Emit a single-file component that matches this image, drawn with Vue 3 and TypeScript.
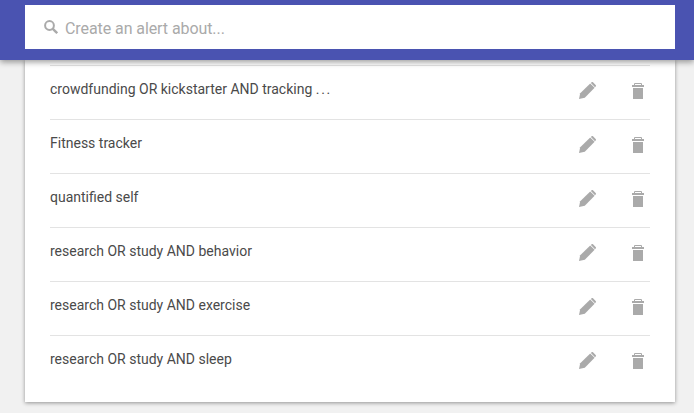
<template>
  <div class="page">
    <header class="topbar">
      <label class="search">
        <svg class="search__icon" viewBox="0 0 14 14" width="14" height="14">
          <circle cx="5.5" cy="5.5" r="4.4" fill="none" stroke="#aaa" stroke-width="2" />
          <path d="M8.6 8.6 13.2 13.2" stroke="#aaa" stroke-width="2.4" />
        </svg>
        <input class="search__input" type="text" placeholder="Create an alert about..." />
      </label>
    </header>
    <main class="card">
      <div v-for="alert in alerts" :key="alert.name" class="row">
        <span class="row__name">{{ alert.name }} <span v-if="alert.cut" class="row__cut">...</span></span>
        <svg class="row__edit" viewBox="0 0 17 17" width="17" height="17">
          <path d="M0 17 1.2 11.2 11.2 1.4 15.6 5.8 5.8 15.8Z" fill="#aaa" />
          <path d="M11.9 1 12.6.3c.4-.4 1-.4 1.4 0l2.7 2.7c.4.4.4 1 0 1.4l-.7.8Z" fill="#aaa" />
        </svg>
        <svg class="row__delete" viewBox="0 0 12 16" width="12" height="16">
          <path d="M2.5 2V.5h7V2" fill="none" stroke="#aaa" stroke-width="1" />
          <path d="M0 2h12v2H0ZM1 5h10v11H1Z" fill="#aaa" />
        </svg>
      </div>
    </main>
  </div>
</template>

<script setup lang="ts">
const alerts: { name: string; cut?: boolean }[] = [
  { name: 'crowdfunding OR kickstarter AND tracking', cut: true },
  { name: 'Fitness tracker' },
  { name: 'quantified self' },
  { name: 'research OR study AND behavior' },
  { name: 'research OR study AND exercise' },
  { name: 'research OR study AND sleep' },
]
</script>

<style>
html,
body {
  margin: 0;
  background: #f1f1f1;
}
</style>

<style scoped>
.page {
  height: 413px;
  overflow: hidden;
  font-family: Roboto, "Liberation Sans", sans-serif;
}

.topbar {
  position: relative;
  z-index: 1;
  height: 60px;
  box-sizing: border-box;
  padding: 5px 19px 0 25px;
  background: #4a53b1;
  box-shadow: 0 2px 6px rgba(0, 0, 0, 0.4);
}

.search {
  display: flex;
  align-items: center;
  height: 44px;
  padding-left: 19px;
  background: #fff;
}

.search__icon {
  flex: none;
  margin-right: 7px;
}

.search__input {
  flex: 1;
  border: 0;
  outline: none;
  padding: 2px 0 0;
  font: 16px Roboto, "Liberation Sans", sans-serif;
  letter-spacing: -0.08px;
  background: transparent;
}

.search__input::placeholder {
  color: #aaa;
  opacity: 1;
}

.card {
  width: 650px;
  height: 342px;
  box-sizing: border-box;
  margin-left: 25px;
  padding: 5px 25px 0;
  background: #fff;
  box-shadow: 0 1px 4px rgba(0, 0, 0, 0.4);
}

.row {
  display: flex;
  align-items: center;
  height: 54px;
  box-sizing: border-box;
  padding-bottom: 4px;
  border-top: 1px solid #e3e3e3;
  color: #4a4a4a;
}

.row__name {
  flex: 1;
  padding-bottom: 4px;
  font-size: 14px;
}

.row__cut {
  letter-spacing: 1.7px;
}

.row__edit {
  flex: none;
  margin-right: 36px;
}

.row__delete {
  flex: none;
  margin-right: 6px;
}
</style>
